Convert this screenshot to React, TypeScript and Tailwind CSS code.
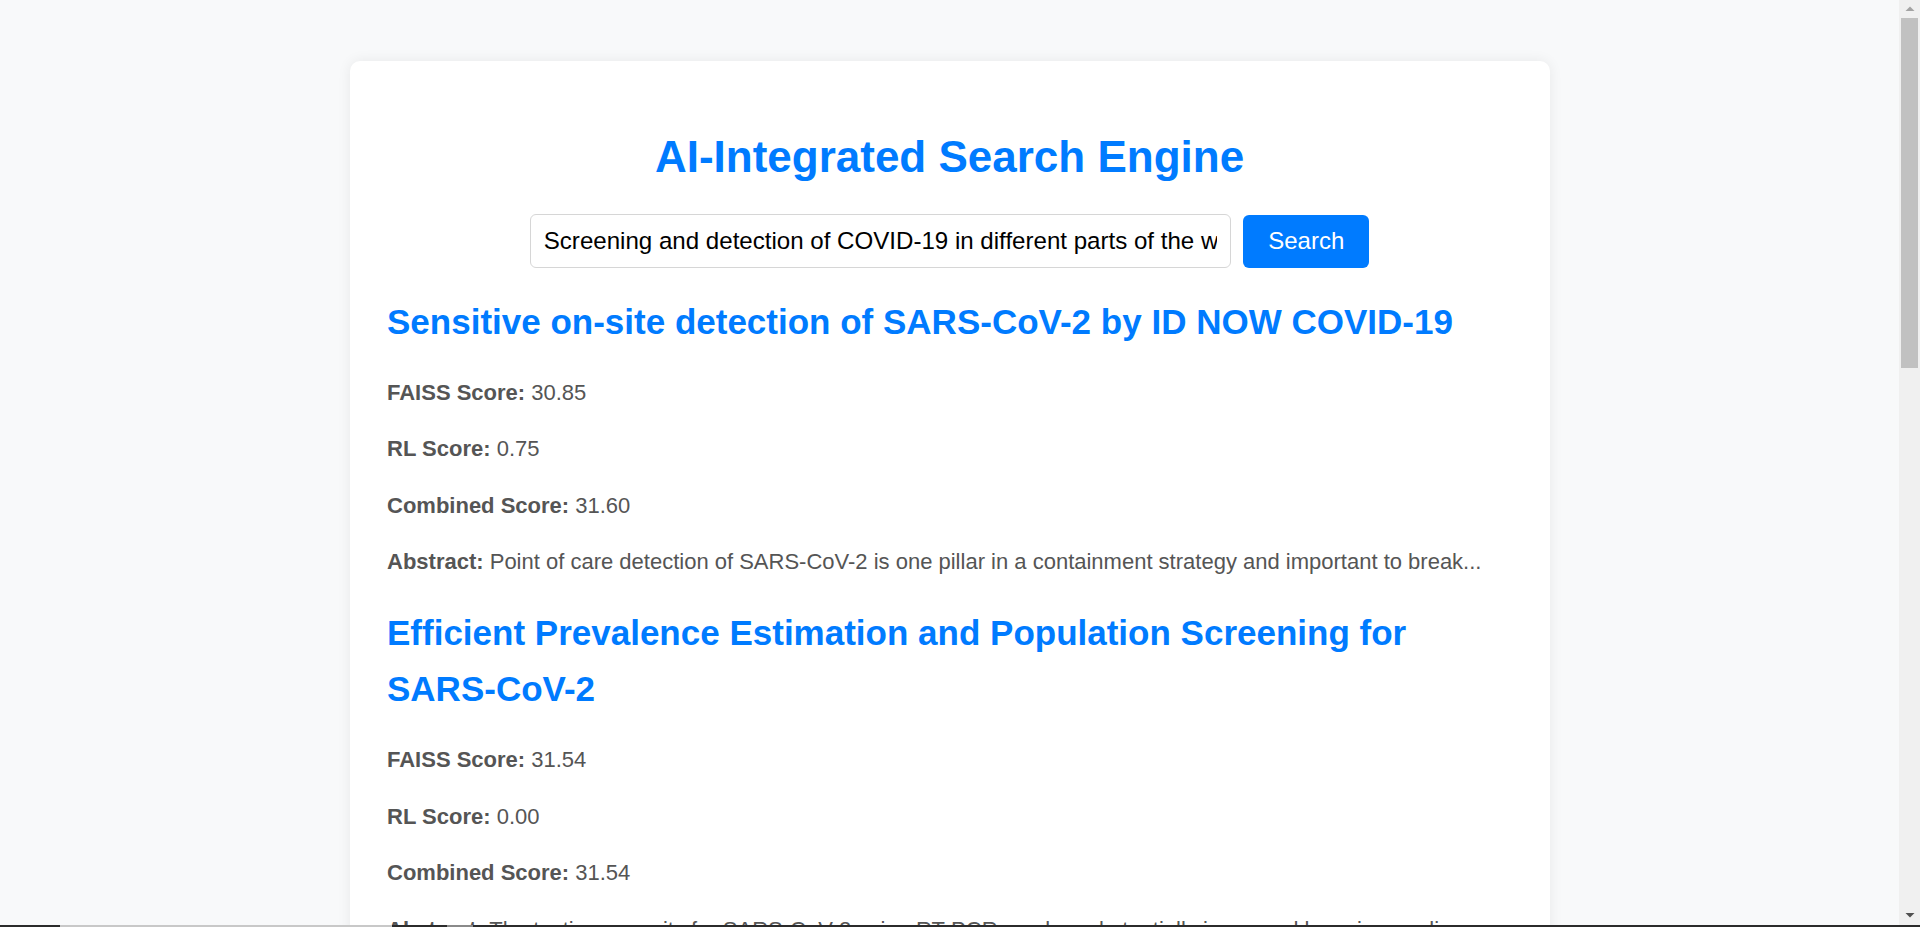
import React from "react";

type Result = {
  title: string;
  faiss: string;
  rl: string;
  combined: string;
  abstract: string;
};

const results: Result[] = [
  {
    title: "Sensitive on-site detection of SARS-CoV-2 by ID NOW COVID-19",
    faiss: "30.85",
    rl: "0.75",
    combined: "31.60",
    abstract:
      "Point of care detection of SARS-CoV-2 is one pillar in a containment strategy and important to break...",
  },
  {
    title: "Efficient Prevalence Estimation and Population Screening for SARS-CoV-2",
    faiss: "31.54",
    rl: "0.00",
    combined: "31.54",
    abstract:
      "The testing capacity for SARS-CoV-2 using RT-PCR can be substantially increased by using pooling...",
  },
  {
    title: "Rapid screening for COVID-19 in community settings",
    faiss: "32.10",
    rl: "0.00",
    combined: "32.10",
    abstract:
      "Early identification of infected individuals is essential to limit the spread of the virus in...",
  },
  {
    title: "Detection of SARS-CoV-2 RNA in wastewater as an early warning of COVID-19 outbreaks",
    faiss: "32.47",
    rl: "0.00",
    combined: "32.47",
    abstract:
      "Wastewater-based epidemiology offers a complementary approach for monitoring community...",
  },
  {
    title: "Global comparison of COVID-19 testing strategies",
    faiss: "33.02",
    rl: "0.00",
    combined: "33.02",
    abstract:
      "Testing strategies for COVID-19 vary widely between countries and regions of the world...",
  },
  {
    title: "Serological screening for SARS-CoV-2 antibodies",
    faiss: "33.38",
    rl: "0.00",
    combined: "33.38",
    abstract:
      "Serological assays provide information on past infection and population level immunity...",
  },
];

function Row({ label, value, first }: { label: string; value: string; first?: boolean }) {
  return (
    <p
      className={
        (first ? "mt-[26px] " : "mt-[22px] ") +
        "text-[22px] leading-[34.5px] text-[#555555] whitespace-nowrap"
      }
    >
      <strong className="font-bold">{label}</strong> {value}
    </p>
  );
}

function Title({ text }: { text: string }) {
  const words = text.split(" ");
  return (
    <h2 className="mt-[25.5px] text-[35px] leading-[56px] font-bold text-[#007bff]">
      {words.map((w, i) => (
        <React.Fragment key={i}>
          <span className="whitespace-nowrap">{w}</span>
          {i < words.length - 1 ? " " : null}
        </React.Fragment>
      ))}
    </h2>
  );
}

export default function App() {
  return (
    <div className="relative flex h-screen overflow-hidden font-['Liberation_Sans',Arial,sans-serif]">
      <div className="h-screen flex-1 overflow-y-auto bg-[#f8f9fa] [scrollbar-width:none]">
        <div className="pt-[61px] pb-[61px]">
          <div className="mx-auto w-[1200px] rounded-[10px] bg-white px-[37.5px] pt-[70px] pb-[37.5px] shadow-[0_0_14px_rgba(0,0,0,0.07)]">
            <h1 className="text-center text-[44px] leading-[52px] font-bold text-[#007bff]">
              AI-Integrated Search Engine
            </h1>
            <div className="mt-[31px] flex items-center justify-center gap-[12.5px]">
              <input
                type="text"
                defaultValue="Screening and detection of COVID-19 in different parts of the world"
                className="h-[54px] w-[701px] rounded-[6px] border border-[#d6d6d6] bg-white px-[13px] text-[24.1px] text-black outline-none"
              />
              <button
                type="button"
                className="h-[53px] w-[126px] rounded-[6px] bg-[#007bff] text-[24px] text-white"
              >
                Search
              </button>
            </div>
            {results.map((r, i) => (
              <div key={i}>
                <Title text={r.title} />
                <Row first label="FAISS Score:" value={r.faiss} />
                <Row label="RL Score:" value={r.rl} />
                <Row label="Combined Score:" value={r.combined} />
                <Row label="Abstract:" value={r.abstract} />
              </div>
            ))}
          </div>
        </div>
      </div>

      {/* vertical scrollbar */}
      <div className="flex h-screen w-[21px] flex-col items-center bg-[#f0f0f0]">
        <div className="flex h-[18px] w-full justify-center pt-[6px]">
          <svg width="10" height="6" viewBox="0 0 10 6">
            <polygon points="5,0.5 9.5,5 0.5,5" fill="#a3a3a3" />
          </svg>
        </div>
        <div className="h-[350px] w-[17px] bg-[#c1c1c1]" />
        <div className="flex-1" />
        <div className="flex h-[15px] w-full justify-center">
          <svg width="10" height="6" viewBox="0 0 10 6">
            <polygon points="0.5,1 9.5,1 5,5.5" fill="#505050" />
          </svg>
        </div>
      </div>

      {/* bottom edge strip */}
      <div className="pointer-events-none absolute bottom-0 left-0 right-0 flex h-[2px]">
        <div className="w-[60px] bg-[#2b2b2b]" />
        <div className="w-[332px] bg-[#c8c8c8]" />
        <div className="w-[55px] bg-[#2b2b2b]" />
        <div className="w-[26px] bg-[#8a8a8a]" />
        <div className="flex-1 bg-[#2b2b2b]" />
      </div>
    </div>
  );
}
